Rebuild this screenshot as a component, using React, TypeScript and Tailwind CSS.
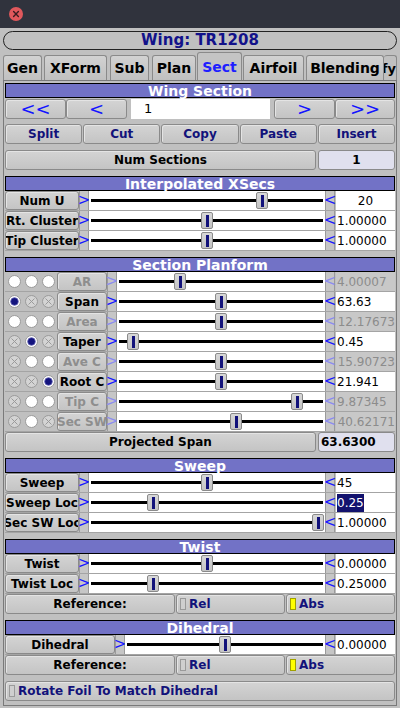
import React from "react";

type Circ = "o" | "x" | "on";

function Btn({ className = "", children }: { className?: string; children?: React.ReactNode }) {
  return (
    <div
      className={`flex items-center justify-center rounded-[3px] border border-[#8a8a8a] bg-gradient-to-b from-[#d4d4d4] to-[#c4c4c4] shadow-[inset_1px_1px_0_#e4e4e4] ${className}`}
    >
      {children}
    </div>
  );
}

function Header({ title }: { title: string }) {
  return (
    <div className="h-[15px] border border-black bg-[#7272c6] flex items-center justify-center text-white font-bold text-[14px] leading-none">
      {title}
    </div>
  );
}

function Circle({ s }: { s: Circ }) {
  return (
    <svg width="13" height="13" viewBox="0 0 13 13">
      <circle cx="6.5" cy="6.5" r="6" fill={s === "x" ? "#d4d4d4" : "#ffffff"} stroke="#9a9a9a" strokeWidth="1" />
      {s === "x" && (
        <g stroke="#9a9a9a" strokeWidth="1">
          <line x1="3.5" y1="3.5" x2="9.5" y2="9.5" />
          <line x1="9.5" y1="3.5" x2="3.5" y2="9.5" />
        </g>
      )}
      {s === "on" && <circle cx="6.5" cy="6.5" r="3.8" fill="#14147e" stroke="#5a5ab0" strokeWidth="0.8" />}
    </svg>
  );
}

function Slider({ start, thumb }: { start: number; thumb: number }) {
  const left = thumb - start - 6;
  return (
    <div className="relative flex-1 h-full bg-white">
      <div className="absolute left-[2px] right-[2px] top-[8px] h-[3px] bg-black" />
      <div
        className="absolute top-[1px] h-[17px] w-[12px] flex items-center justify-center rounded-[2px] border border-[#8a8a8a] bg-gradient-to-b from-[#d8d8d8] to-[#c4c4c4]"
        style={{ left }}
      >
        <div className="w-[3px] h-[12px] bg-[#12127a]" />
      </div>
    </div>
  );
}

function Arrow({ ch, inactive }: { ch: string; inactive?: boolean }) {
  return (
    <div
      className={`h-full flex items-center justify-center border-x border-[#9a9a9a] bg-[#c6c6c6] text-[15px] leading-none overflow-visible ${
        inactive ? "text-[#8c8cf0] w-[10px]" : "text-[#1818ff] w-[10px]"
      }`}
    >
      {ch}
    </div>
  );
}

type RowProps = {
  label: string;
  labelW: string;
  start: number;
  thumb: number;
  value: string;
  inactive?: boolean;
  right?: boolean;
  center?: boolean;
  selected?: boolean;
  circles?: Circ[];
};

function SliderRow({ label, labelW, start, thumb, value, inactive, right, center, selected, circles }: RowProps) {
  return (
    <div className="h-[20px] flex items-stretch border-b border-[#a4a4a4]">
      {circles && (
        <div className="w-[52px] flex items-center pl-[3px] gap-[4px]">
          {circles.map((c, i) => (
            <Circle key={i} s={c} />
          ))}
        </div>
      )}
      <Btn
        className={`${labelW} h-full rounded-[2px] text-[12px] font-bold whitespace-nowrap overflow-hidden ${
          inactive ? "text-[#8e8e8e]" : "text-black"
        }`}
      >
        {label}
      </Btn>
      <Arrow ch=">" inactive={inactive} />
      <Slider start={start} thumb={thumb} />
      <div className="w-[11px]">
        <Arrow ch="<" inactive={inactive} />
      </div>
      <div
        className={`w-[59px] h-full flex items-center overflow-hidden whitespace-nowrap text-[12px] ${
          inactive ? "bg-[#c8c8c8] text-[#8c8c8c]" : "bg-white text-black"
        } ${right ? "justify-end" : center ? "justify-center" : "justify-start pl-[1px]"}`}
      >
        <span className={selected ? "bg-[#12126e] text-white" : ""}>{value}</span>
      </div>
    </div>
  );
}

function Toggle({ label, on, className = "" }: { label: string; on?: boolean; className?: string }) {
  return (
    <Btn className={`justify-start! h-full ${className}`}>
      <div className="flex items-center w-full pl-[3px] gap-[3px]">
        <div
          className={`w-[6px] h-[12px] border ${on ? "bg-[#ffff00] border-[#a0a000]" : "bg-[#cfcfcf] border-[#9a9a9a]"}`}
        />
        <span className="text-[12px] font-bold text-[#12127a] whitespace-nowrap">{label}</span>
      </div>
    </Btn>
  );
}

function RefRow() {
  return (
    <div className="h-[20px] flex gap-[1px]">
      <Btn className="w-[170px] h-full text-[12px] font-bold text-black">Reference:</Btn>
      <Toggle label="Rel" className="w-[109px]" />
      <Toggle label="Abs" on className="flex-1" />
    </div>
  );
}

const tabs = [
  { t: "Gen", w: "w-[39px] mr-[2px]" },
  { t: "XForm", w: "w-[63px] mr-[3px]" },
  { t: "Sub", w: "w-[39px] mr-[3px]" },
  { t: "Plan", w: "w-[44px] mr-[1px]" },
  { t: "Sect", w: "w-[45px] mr-[1px]", sel: true },
  { t: "Airfoil", w: "w-[61px] mr-[2px]" },
  { t: "Blending", w: "w-[78px]" },
];

export default function App() {
  const planform: { l: string; v: string; th: number; c: Circ[]; ina?: boolean; r?: boolean }[] = [
    { l: "AR", v: "4.00007", th: 180, c: ["o", "o", "o"], ina: true },
    { l: "Span", v: "63.63", th: 221, c: ["on", "x", "x"] },
    { l: "Area", v: "12.17673", th: 221, c: ["o", "o", "o"], ina: true, r: true },
    { l: "Taper", v: "0.45", th: 133, c: ["x", "on", "x"] },
    { l: "Ave C", v: "15.90723", th: 221, c: ["x", "o", "o"], ina: true, r: true },
    { l: "Root C", v: "21.941", th: 221, c: ["x", "x", "on"] },
    { l: "Tip C", v: "9.87345", th: 297, c: ["x", "o", "o"], ina: true },
    { l: "Sec SW", v: "40.62171", th: 236, c: ["x", "o", "x"], ina: true, r: true },
  ];

  return (
    <div className="w-[400px] h-[708px] overflow-hidden bg-[#c0c0c0] font-['DejaVu_Sans',sans-serif]">
      <div className="h-[28px] bg-[#30333d] flex items-center pl-[9px]">
        <svg width="14" height="14" viewBox="0 0 14 14">
          <circle cx="7" cy="7" r="7" fill="#e0585c" />
          <g stroke="#3a1c20" strokeWidth="1.4" strokeLinecap="round">
            <line x1="4.6" y1="4.6" x2="9.4" y2="9.4" />
            <line x1="9.4" y1="4.6" x2="4.6" y2="9.4" />
          </g>
        </svg>
      </div>

      <div className="px-[3px]">
        <div className="mt-[3px] h-[19px] rounded-full border border-[#222] flex items-center justify-center text-[15px] font-bold text-[#12128a] leading-none">
          Wing: TR1208
        </div>

        <div className="mt-[2px] h-[28px] flex items-end">
          {tabs.map((tb) => (
            <div
              key={tb.t}
              className={`${tb.w} flex items-center justify-center rounded-t-[3px] border border-b-0 border-[#8a8a8a] text-[14px] font-bold leading-none ${
                tb.sel
                  ? "h-[28px] bg-[#c4c4c4] text-[#1e1eff]"
                  : "h-[25px] bg-gradient-to-b from-[#d2d2d2] to-[#c0c0c0] text-black"
              }`}
            >
              {tb.t}
            </div>
          ))}
          <div className="flex-1 h-[25px] flex items-center justify-end overflow-hidden rounded-t-[3px] border border-l-0 border-b-0 border-[#8a8a8a] text-[13px] font-bold leading-none">
            Modify
          </div>
        </div>

        <div className="h-[626px] border border-[#7a7a7a] px-[1px] pt-[2px]">
          <Header title="Wing Section" />
          <div className="mt-[1px] h-[20px] flex">
            <Btn className="w-[61px] h-full text-[18px] leading-none text-[#1414ff]">&lt;&lt;</Btn>
            <Btn className="w-[61px] h-full text-[18px] leading-none text-[#1414ff]">&lt;</Btn>
            <div className="ml-[4px] w-[139px] h-full bg-white flex items-center pl-[13px] text-[13px]">1</div>
            <Btn className="ml-[4px] w-[61px] h-full text-[18px] leading-none text-[#1414ff]">&gt;</Btn>
            <Btn className="flex-1 h-full text-[18px] leading-none text-[#1414ff]">&gt;&gt;</Btn>
          </div>

          <div className="mt-[5px] h-[20px] flex gap-[1px]">
            {["Split", "Cut", "Copy", "Paste", "Insert"].map((b) => (
              <Btn key={b} className="flex-1 h-full text-[12px] font-bold text-[#12127a]">
                {b}
              </Btn>
            ))}
          </div>

          <div className="mt-[6px] h-[20px] flex gap-[2px]">
            <Btn className="flex-1 h-full text-[12px] font-bold text-black">Num Sections</Btn>
            <div className="w-[77px] h-full rounded-[3px] border border-[#8a8a8a] bg-[#e0e0ee] flex items-center justify-center text-[12px] font-bold">
              1
            </div>
          </div>

          <div className="mt-[6px]">
            <Header title="Interpolated XSecs" />
            <SliderRow label="Num U" labelW="w-[74px]" start={89} thumb={262} value="20" center />
            <SliderRow label="Rt. Cluster" labelW="w-[74px]" start={89} thumb={207} value="1.00000" />
            <SliderRow label="Tip Cluster" labelW="w-[74px]" start={89} thumb={207} value="1.00000" />
          </div>

          <div className="mt-[6px]">
            <Header title="Section Planform" />
            {planform.map((p) => (
              <SliderRow
                key={p.l}
                label={p.l}
                labelW="w-[50px]"
                start={117}
                thumb={p.th}
                value={p.v}
                inactive={p.ina}
                right={p.r}
                circles={p.c}
              />
            ))}
            <div className="h-[20px] flex gap-[2px]">
              <Btn className="flex-1 h-full text-[12px] font-bold text-black">Projected Span</Btn>
              <div className="w-[77px] h-full rounded-[3px] border border-[#8a8a8a] bg-[#e0e0ee] flex items-center pl-[2px] text-[12px] font-bold">
                63.6300
              </div>
            </div>
          </div>

          <div className="mt-[6px]">
            <Header title="Sweep" />
            <SliderRow label="Sweep" labelW="w-[74px]" start={89} thumb={207} value="45" />
            <SliderRow label="Sweep Loc" labelW="w-[74px]" start={89} thumb={153} value="0.25" selected />
            <SliderRow label="Sec SW Loc" labelW="w-[74px]" start={89} thumb={318} value="1.00000" />
          </div>

          <div className="mt-[6px]">
            <Header title="Twist" />
            <SliderRow label="Twist" labelW="w-[74px]" start={89} thumb={207} value="0.00000" />
            <SliderRow label="Twist Loc" labelW="w-[74px]" start={89} thumb={153} value="0.25000" />
            <RefRow />
          </div>

          <div className="mt-[6px]">
            <Header title="Dihedral" />
            <SliderRow label="Dihedral" labelW="w-[110px]" start={125} thumb={225} value="0.00000" />
            <RefRow />
          </div>

          <div className="mt-[6px] h-[20px] flex">
            <Toggle label="Rotate Foil To Match Dihedral" className="flex-1" />
          </div>
        </div>
      </div>
    </div>
  );
}
